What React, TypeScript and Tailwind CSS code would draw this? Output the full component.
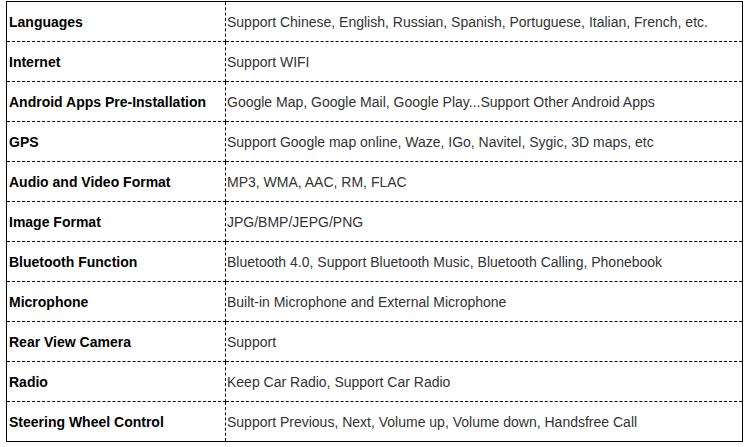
const specs = [
  ["Languages", "Support Chinese, English, Russian, Spanish, Portuguese, Italian, French, etc."],
  ["Internet", "Support WIFI"],
  ["Android Apps Pre-Installation", "Google Map, Google Mail, Google Play...Support Other Android Apps"],
  ["GPS", "Support Google map online, Waze, IGo, Navitel, Sygic, 3D maps, etc"],
  ["Audio and Video Format", "MP3, WMA, AAC, RM, FLAC"],
  ["Image Format", "JPG/BMP/JEPG/PNG"],
  ["Bluetooth Function", "Bluetooth 4.0, Support Bluetooth Music, Bluetooth Calling, Phonebook"],
  ["Microphone", "Built-in Microphone and External Microphone"],
  ["Rear View Camera", "Support"],
  ["Radio", "Keep Car Radio, Support Car Radio"],
  ["Steering Wheel Control", "Support Previous, Next, Volume up, Volume down, Handsfree Call"],
];

export default function App() {
  return (
    <div className="w-[750px] h-[447px] bg-white pt-[1px] pl-[6px] font-['Liberation_Sans',Arial,sans-serif] text-[14px]">
      <table className="w-[737px] border-collapse border border-solid border-black">
        <tbody>
          {specs.map(([k, v]) => (
            <tr key={k} className="h-[40px]">
              <td className="w-[219px] border border-dashed border-black pl-[2px] pt-[1px] font-bold text-black align-middle">
                {k}
              </td>
              <td className="border border-dashed border-black pl-[1px] pt-[1px] text-[#333] align-middle">
                {v}
              </td>
            </tr>
          ))}
        </tbody>
      </table>
    </div>
  );
}
